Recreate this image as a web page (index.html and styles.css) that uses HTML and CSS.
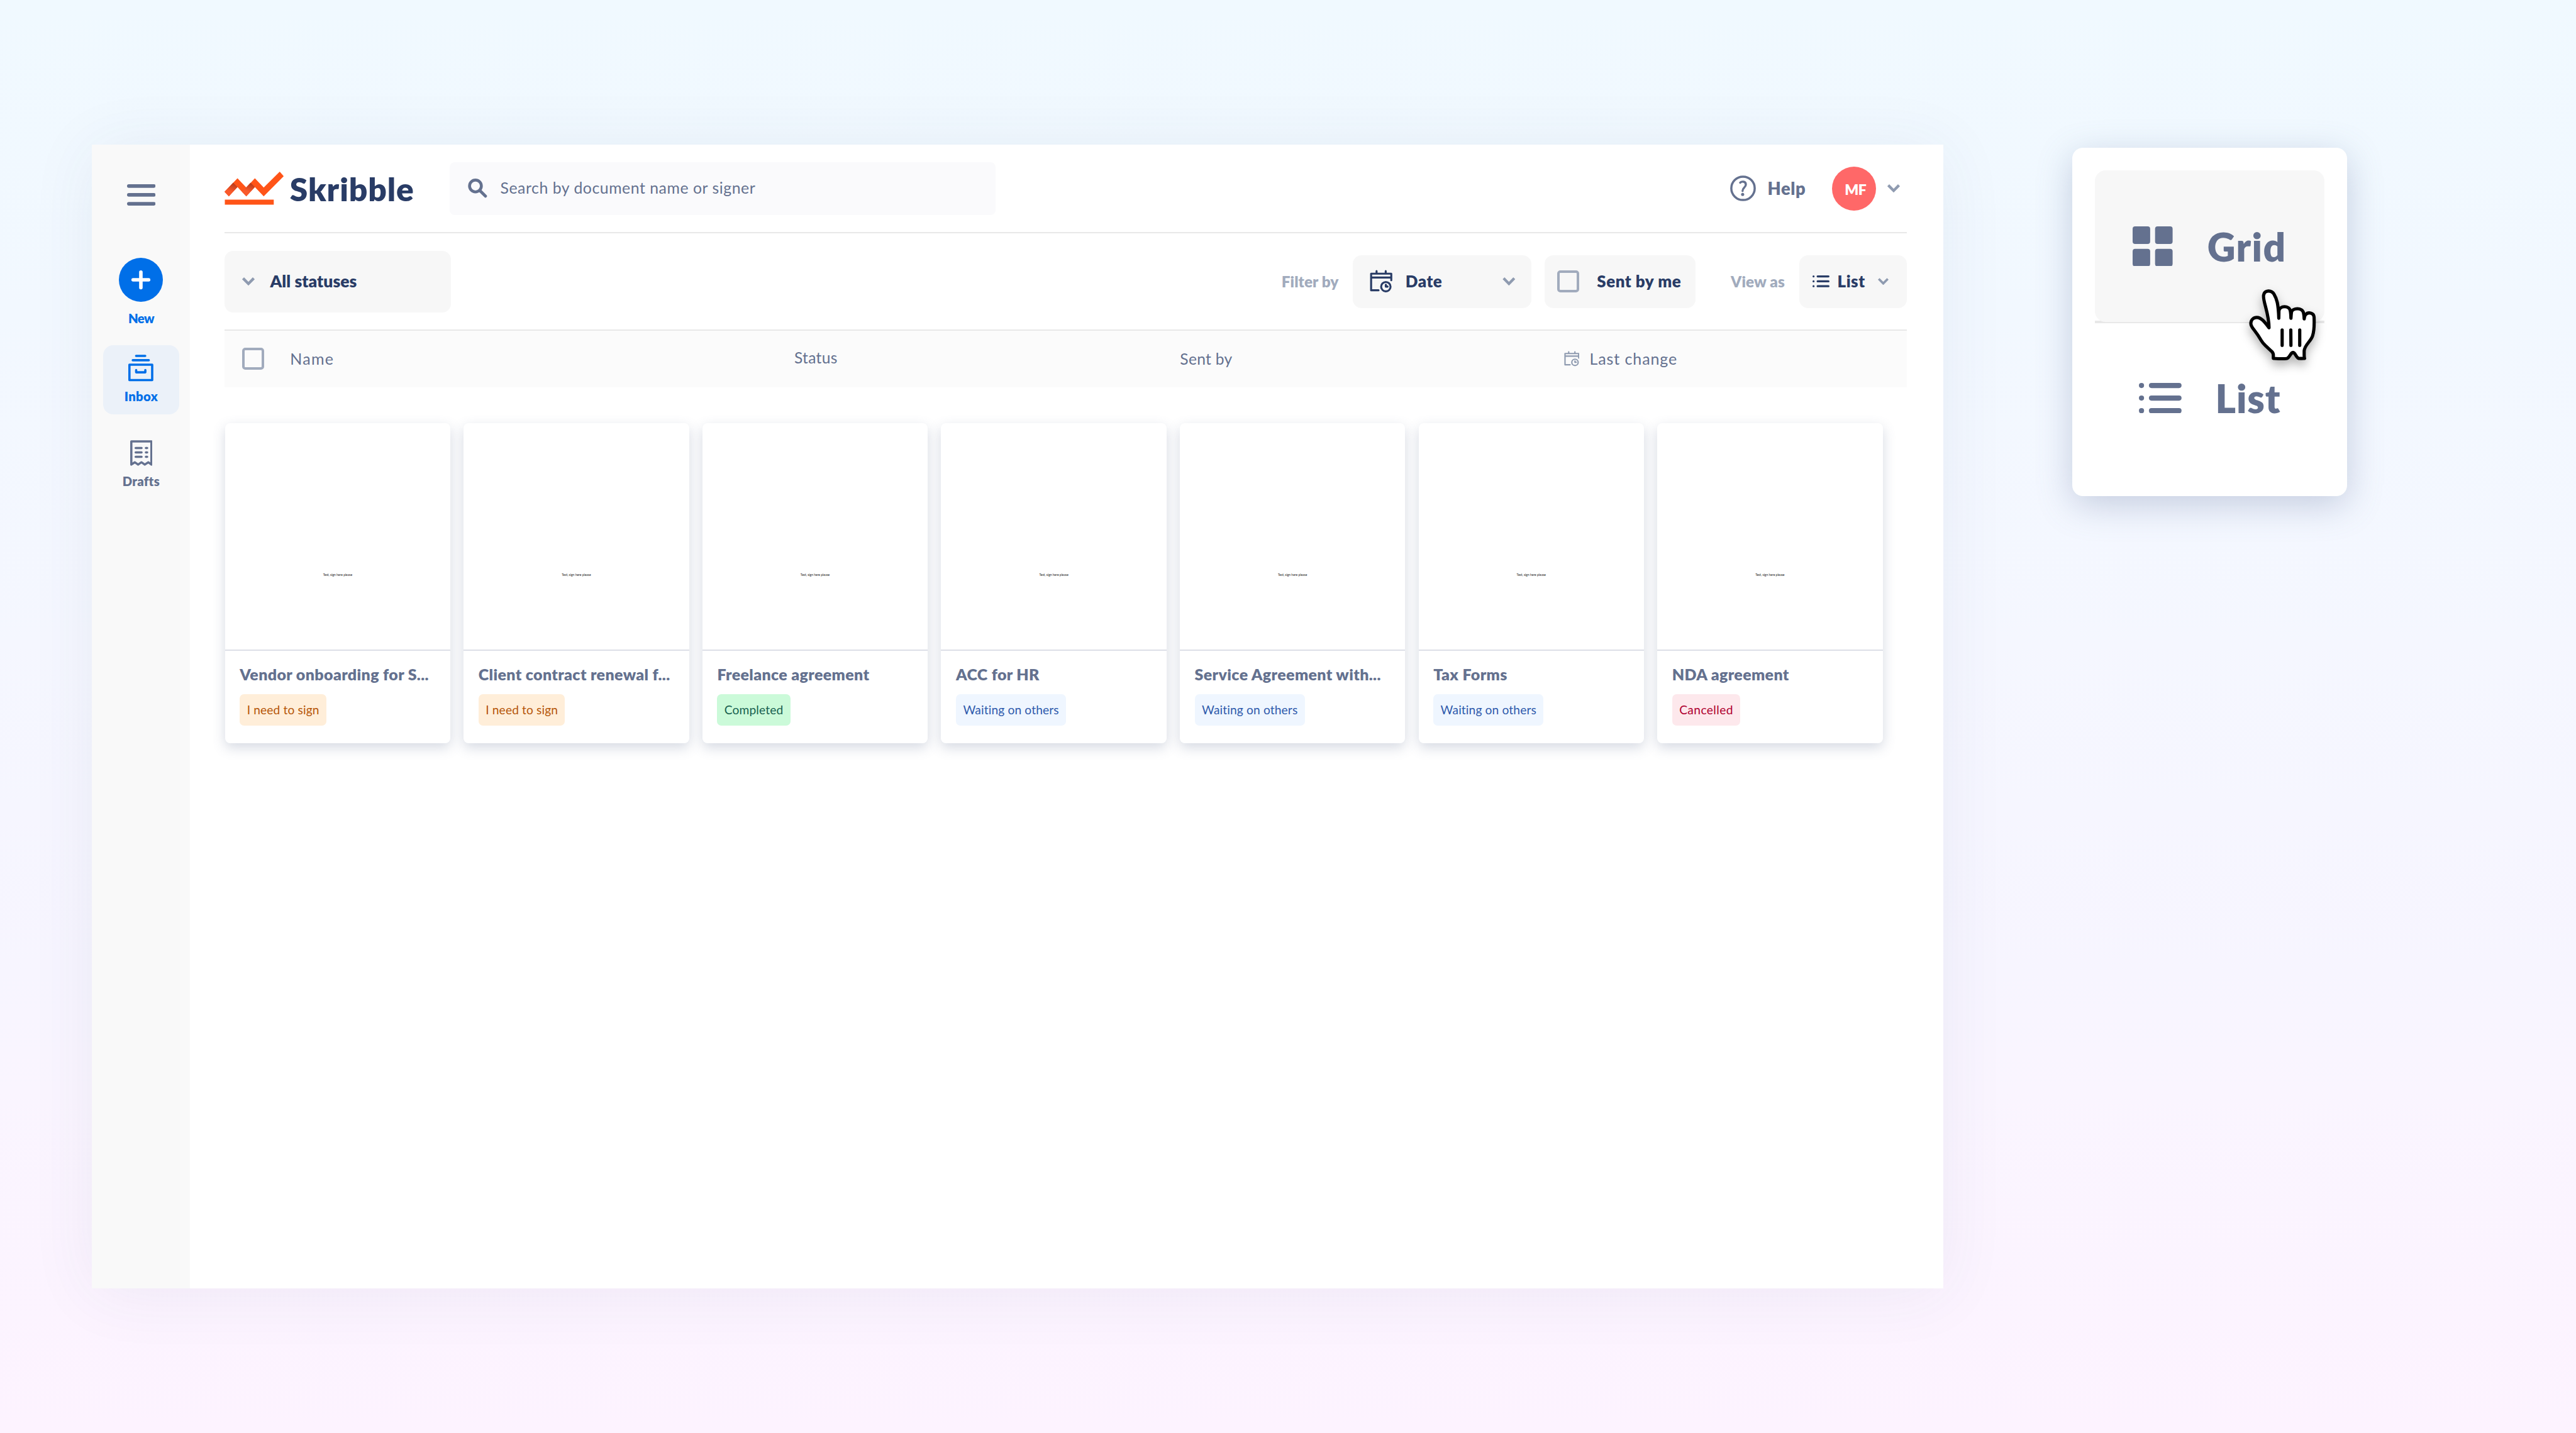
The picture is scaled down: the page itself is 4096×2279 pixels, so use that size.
FILE: index.html
```html
<!DOCTYPE html>
<html lang="en">
<head>
  <meta charset="UTF-8" />
  <meta name="viewport" content="width=device-width, initial-scale=1.0"/>
  <title>Skribble</title>
  <link rel="stylesheet" href="styles.css">
</head>
<body>

  <!-- Shared icons -->
  <svg class="sprite" width="0" height="0">
    <symbol id="chevron" viewBox="0 0 20 13.4">
      <path d="M1.5 1.6 10 10.2l8.5-8.6" fill="none" stroke="currentColor" stroke-width="4.3"/>
    </symbol>
    <symbol id="calendar" viewBox="56 81 186 186">
      <g fill="none" stroke="currentColor" stroke-width="16" stroke-linecap="round" stroke-linejoin="round">
        <path d="M127 247H67V113h163v53M67 144h163M111 92v21M185 92v21"/>
        <circle cx="186" cy="218" r="38"/>
        <path d="M186 203v14h14" stroke-width="17"/>
      </g>
    </symbol>
  </svg>

  <!-- App window -->
  <div class="app">
    <nav class="sidebar">
      <svg class="burger" width="45.4" height="34" viewBox="0 0 45.4 34">
        <g fill="#64718f">
          <rect width="45.4" height="5.7" rx="2.8"/>
          <rect y="14.1" width="45.4" height="5.7" rx="2.8"/>
          <rect y="28.2" width="45.4" height="5.7" rx="2.8"/>
        </g>
      </svg>
      <a class="nav-item new">
        <svg width="70" height="70" viewBox="0 0 70 70">
          <circle cx="35" cy="35" r="35" fill="#006fe8"/>
          <path d="M35 22.7v24.8M22.7 35h24.6" stroke="#fff" stroke-width="5.6" stroke-linecap="round"/>
        </svg>
        <span>New</span>
      </a>
      <a class="nav-item inbox">
        <svg width="39.8" height="42.3" viewBox="0 0 39.8 42.3">
          <g fill="none" stroke="currentColor" stroke-width="3.6" stroke-linecap="round" stroke-linejoin="round">
            <path d="M12.4 2h14.5M7.1 8.9h25.5M1.8 16h36.2v24.5H1.8zM12.5 24.6v3.5h14.6v-3.5"/>
          </g>
        </svg>
        <span>Inbox</span>
      </a>
      <a class="nav-item drafts">
        <svg width="35.6" height="40.7" viewBox="0 0 35.6 40.7">
          <g fill="none" stroke="currentColor" stroke-width="3.5" stroke-linecap="round" stroke-linejoin="round">
            <path d="M1.8 38.9V2h32v36.9l-5-3.7-5.6 3.7-5.3-3.7-5.3 3.7-5.3-3.7z"/>
            <path d="M8.7 12.6h9.4M8.7 19.5h9.4M8.7 26.6h9.4M25 12.6h2M25 19.5h2M25 26.6h2"/>
          </g>
        </svg>
        <span>Drafts</span>
      </a>
    </nav>

    <main class="content">
      <header>
        <div class="logo">
          <svg width="95" height="53" viewBox="0 0 95 53">
            <defs>
              <linearGradient id="fold1" x1="17" y1="19" x2="10" y2="38" gradientUnits="userSpaceOnUse">
                <stop offset="0" stop-color="#b5391a"/>
                <stop offset="0.7" stop-color="#f9592b"/>
              </linearGradient>
              <linearGradient id="fold2" x1="44" y1="19" x2="38" y2="38" gradientUnits="userSpaceOnUse">
                <stop offset="0" stop-color="#b5391a"/>
                <stop offset="0.7" stop-color="#f9592b"/>
              </linearGradient>
            </defs>
            <path fill="#ff5418" d="M0 32.1 20.6 10.4l14 14.8 13.7-14.8 14 14.8L87.8 0l6.3 7.3-31.8 31.9-14-14.8-13.7 14.8-14-14.8L6.9 39.2z"/>
            <path fill="url(#fold1)" d="M0 32.1 13.7 17.5l6.9 6.9L6.9 39.2z"/>
            <path fill="url(#fold2)" d="m27.7 32.1 13.7-14.6 6.9 6.9-13.7 14.8z"/>
            <path fill="#ff5418" d="M.5 44.4h77.8v8H.5z"/>
          </svg>
          <span>Skribble</span>
        </div>
        <div class="search">
          <svg width="31" height="31" viewBox="0 0 31 31">
            <g fill="none" stroke="#64718f" stroke-linecap="round">
              <circle cx="12" cy="11.8" r="9.4" stroke-width="4.6"/>
              <path d="m19.2 19.2 8.7 8.7" stroke-width="4.8"/>
            </g>
          </svg>
          <span>Search by document name or signer</span>
        </div>
        <div class="account">
          <svg width="41" height="41" viewBox="0 0 41 41">
            <g fill="none" stroke="#64718f" stroke-linecap="round">
              <circle cx="20.5" cy="20.5" r="18.6" stroke-width="3.5"/>
              <path d="M16 11.5c2.6-2.7 9-2.2 9 2.9 0 4.6-5.2 4.9-5.2 10.3" stroke-width="3.4"/>
            </g>
            <circle cx="19.9" cy="30.2" r="2.5" fill="#64718f"/>
          </svg>
          <span class="help">Help</span>
          <div class="avatar">MF</div>
          <svg class="chev" width="20" height="13.4"><use href="#chevron"/></svg>
        </div>
      </header>

      <div class="toolbar">
        <div class="box statuses">
          <svg class="chev" width="20" height="13.4"><use href="#chevron"/></svg>
          <span>All statuses</span>
        </div>
        <span class="hint filter-hint">Filter by</span>
        <div class="box date">
          <svg width="36.6" height="36.6"><use href="#calendar"/></svg>
          <span>Date</span>
          <svg class="chev" width="20.6" height="13.4"><use href="#chevron"/></svg>
        </div>
        <div class="box sent">
          <i class="checkbox"></i>
          <span>Sent by me</span>
        </div>
        <span class="hint view-hint">View as</span>
        <div class="box view">
          <svg width="27" height="18.8" viewBox="0 0 27 18.8">
            <g stroke="currentColor" stroke-width="3.2" stroke-linecap="round">
              <path d="M1.6 1.6h.1M1.6 9.4h.1M1.6 17.2h.1M8.1 1.6h17.3M8.1 9.4h17.3M8.1 17.2h17.3"/>
            </g>
          </svg>
          <span>List</span>
          <svg class="chev" width="17" height="11.6"><use href="#chevron"/></svg>
        </div>
      </div>

      <div class="table-head">
        <div class="col-name"><i class="checkbox"></i><span>Name</span></div>
        <div class="col-status">Status</div>
        <div class="col-sent">Sent by</div>
        <div class="col-change">
          <svg width="24.8" height="24.8"><use href="#calendar"/></svg>
          <span>Last change</span>
        </div>
      </div>

      <div class="cards">
        <div class="card">
          <div class="preview">Test, sign here please</div>
          <div class="info">
            <h3>Vendor onboarding for S...</h3>
            <span class="badge need">I need to sign</span>
          </div>
        </div>
        <div class="card">
          <div class="preview">Test, sign here please</div>
          <div class="info">
            <h3>Client contract renewal f...</h3>
            <span class="badge need">I need to sign</span>
          </div>
        </div>
        <div class="card">
          <div class="preview">Test, sign here please</div>
          <div class="info">
            <h3>Freelance agreement</h3>
            <span class="badge done">Completed</span>
          </div>
        </div>
        <div class="card">
          <div class="preview">Test, sign here please</div>
          <div class="info">
            <h3>ACC for HR</h3>
            <span class="badge waiting">Waiting on others</span>
          </div>
        </div>
        <div class="card">
          <div class="preview">Test, sign here please</div>
          <div class="info">
            <h3>Service Agreement with...</h3>
            <span class="badge waiting">Waiting on others</span>
          </div>
        </div>
        <div class="card">
          <div class="preview">Test, sign here please</div>
          <div class="info">
            <h3>Tax Forms</h3>
            <span class="badge waiting">Waiting on others</span>
          </div>
        </div>
        <div class="card">
          <div class="preview">Test, sign here please</div>
          <div class="info">
            <h3>NDA agreement</h3>
            <span class="badge cancelled">Cancelled</span>
          </div>
        </div>
      </div>
    </main>
  </div>

  <!-- View switcher -->
  <div class="menu">
    <div class="menu-top">
      <div class="menu-item active">
        <svg width="63.8" height="63.8" viewBox="0 0 63.8 63.8">
          <g fill="#64718f">
            <rect width="27.9" height="27.9" rx="4"/>
            <rect x="35.7" width="27.9" height="27.9" rx="4"/>
            <rect y="35.7" width="27.9" height="27.9" rx="4"/>
            <rect x="35.7" y="35.7" width="27.9" height="27.9" rx="4"/>
          </g>
        </svg>
        <span>Grid</span>
      </div>
    </div>
    <div class="menu-item list">
      <svg width="67.8" height="48.3" viewBox="0 0 67.8 48.3">
        <g fill="#64718f">
          <circle cx="4.1" cy="4.1" r="4.1"/>
          <circle cx="4.1" cy="24.1" r="4.1"/>
          <circle cx="4.1" cy="44.2" r="4.1"/>
          <rect x="15.9" width="51.9" height="8.2" rx="4.1"/>
          <rect x="15.9" y="20" width="51.9" height="8.2" rx="4.1"/>
          <rect x="15.9" y="40.1" width="51.9" height="8.2" rx="4.1"/>
        </g>
      </svg>
      <span>List</span>
    </div>
    <svg class="cursor" width="106.3" height="113.2" viewBox="80 58 540 575">
      <g stroke="#000" stroke-width="26" stroke-linecap="round" stroke-linejoin="round">
        <path fill="#fff" d="M277 617v-25q0-20-14-32L213 513Q193 495 180 473 155 430 118 382C100 360 95 350 95 332 97 303 118 286 143 286c38 0 65 38 99 83 0-50-12-110-28-170-14-50-20-80-15-96 8-38 63-42 84-4 22 36 34 76 38 194l1-60c5-44 84-46 92 0q4 20 5 60 2-30 4-48c8-38 88-42 98 6q4 20 5 47 2-24 12-36c20-22 66-16 68 22 2 50 2 108-12 150-14 46-64 72-68 122v36q1 20 3 25-30 1-48 0c-22-10-27-48-45-48-20 0-24 37-46 47-12 4-80 3-113 1z"/>
        <path fill="none" d="M348 387v124M418 387l1 124M490 387v124"/>
      </g>
    </svg>
  </div>

</body>
</html>
```
FILE: styles.css
```css
* {
  box-sizing: border-box;
}
body {
  margin: 0;
  height: 2279px;
  display: flex;
  align-items: flex-start;
  overflow: hidden;
  font-family: Lato, 'Open Sans', sans-serif;
  line-height: 1;
  color: #64718f;
  background: linear-gradient(180deg, #f0f9ff 0%, #f2f8ff 22%, #f5f7ff 45%, #f7f5ff 68%, #faf5ff 76%, #fdf3ff 100%);
}
svg {
  display: block;
  flex: none;
}
span { white-space: nowrap; }
.sprite { position: absolute; }

/* === App window === */
.app {
  display: flex;
  width: 2943.3px;
  height: 1818.7px;
  margin: 230.3px 0 0 146.4px;
  background: #fff;
  box-shadow: 0 6px 100px rgba(60, 65, 115, 0.07);
}

/* === Sidebar === */
.sidebar {
  width: 156px;
  padding-top: 62.6px;
  background: #f9f9f9;
  display: flex;
  flex-direction: column;
  align-items: center;
}
.nav-item {
  display: flex;
  flex-direction: column;
  align-items: center;
  font-size: 20.3px;
  line-height: 24px;
  font-weight: 800;
  letter-spacing: 0.3px;
}
.new {
  margin-top: 83.6px;
  gap: 13.5px;
  color: #006fe8;
}
.new span { letter-spacing: -0.6px; }
.inbox {
  width: 120.8px;
  height: 110.6px;
  margin-top: 30.7px;
  padding-top: 15.7px;
  gap: 11.4px;
  border-radius: 16px;
  background: #ebf1f9;
  color: #006fe8;
}
.drafts {
  margin-top: 40.7px;
  gap: 12.7px;
}

/* === Header === */
.content {
  flex: 1;
  padding: 0 57.8px 0 54.4px;
}
header {
  height: 141.2px;
  display: flex;
  align-items: center;
  border-bottom: 2px solid #e8e8e8;
}
.logo {
  width: 358.7px;
  display: flex;
  align-items: center;
  gap: 9px;
  font-size: 51.5px;
  font-weight: 800;
  letter-spacing: 0.9px;
  color: #293c66;
}
.logo span { padding-top: 2px; }
.search {
  width: 867.5px;
  height: 84.5px;
  padding-left: 28.1px;
  display: flex;
  align-items: center;
  gap: 21px;
  border-radius: 8px;
  background: #fafafc;
  font-size: 24.8px;
  letter-spacing: 0.54px;
}
.account {
  margin-left: auto;
  padding-right: 11px;
  display: flex;
  align-items: center;
}
.help {
  width: 102.6px;
  margin-left: 18.5px;
  font-size: 27.3px;
  font-weight: 800;
  letter-spacing: 0.6px;
}
.avatar {
  width: 70.3px;
  height: 70.3px;
  margin-right: 17.5px;
  padding: 3px 0 0 4px;
  display: flex;
  align-items: center;
  justify-content: center;
  border-radius: 50%;
  background: #ff6868;
  color: #fff;
  font-size: 23px;
  font-weight: 800;
  letter-spacing: -0.6px;
}
.chev { color: #8f9bb0; }

/* === Toolbar === */
.toolbar {
  height: 152.4px;
  display: flex;
  align-items: center;
}
.box {
  height: 84.3px;
  display: flex;
  align-items: center;
  border-radius: 14px;
  background: #f7f7f7;
  color: #293c66;
  font-size: 25.9px;
  font-weight: 800;
  letter-spacing: 0.55px;
}
.statuses {
  width: 360.6px;
  height: 98.2px;
  padding-left: 28.7px;
  gap: 24px;
  margin-right: auto;
  font-size: 26.5px;
  letter-spacing: 0.05px;
}
.hint {
  color: #a1abbd;
  font-size: 24.3px;
  font-weight: 800;
  letter-spacing: 0.1px;
}
.filter-hint { width: 112.8px; }
.view-hint {
  width: 108.4px;
  margin-left: 56.5px;
}
.date {
  width: 284px;
  padding: 0 24.5px 0 27.7px;
  gap: 20px;
}
.date .chev { margin-left: auto; }
.sent {
  width: 240px;
  margin-left: 21.1px;
  padding-left: 20.7px;
  gap: 28px;
}
.checkbox {
  width: 35px;
  height: 35px;
  border: 4.4px solid #a1abbd;
  border-radius: 5px;
}
.view {
  width: 171.4px;
  padding: 0 28.7px 0 21px;
  gap: 13px;
}
.view .chev { margin-left: auto; }

/* === Table head === */
.table-head {
  height: 92px;
  display: grid;
  grid-template-columns: 906.2px 613.4px 610.2px 1fr;
  align-items: center;
  border-top: 2px solid #e8e8e8;
  background: #fbfbfb;
  font-size: 24.6px;
  letter-spacing: 0.3px;
}
.col-name {
  display: flex;
  align-items: center;
  gap: 41.5px;
  padding-left: 27.9px;
}
.col-name span {
  font-size: 25px;
  letter-spacing: 1.3px;
}
.col-status { padding-bottom: 2.6px; }
.col-change {
  display: flex;
  align-items: center;
  gap: 16.2px;
  font-size: 25px;
  letter-spacing: 0.9px;
}
.col-change svg { color: #8f9bb0; }

/* === Cards === */
.cards {
  display: flex;
  gap: 21.2px;
  padding: 57.6px 0 0 0.9px;
}
.card {
  flex: none;
  width: 358.4px;
  height: 508.7px;
  border-radius: 8px;
  background: #fff;
  box-shadow: 0 7px 20px rgba(80, 95, 135, 0.24);
}
.preview {
  height: 362px;
  padding-top: 123px;
  display: flex;
  align-items: center;
  justify-content: center;
  border-bottom: 2px solid #dcdfe7;
  color: #222;
  font-size: 5px;
}
.info {
  padding: 22.5px 23.6px 0;
}
.card h3 {
  margin: 0 0 18px;
  font-size: 25px;
  line-height: 28px;
  font-weight: 800;
  letter-spacing: 0.35px;
  white-space: nowrap;
}
.badge {
  display: inline-flex;
  align-items: center;
  height: 50px;
  padding: 0 11.2px 0 11.4px;
  border-radius: 7px;
  font-size: 19.2px;
  letter-spacing: 0.13px;
}
.need { background: #ffeed9; color: #b65608; }
.done { background: #cbfad9; color: #17604f; }
.waiting { background: #eff6ff; color: #2e5aac; }
.cancelled {
  background: #fde8ec;
  color: #b00030;
  letter-spacing: 0.4px;
}

/* === View switcher === */
.menu {
  position: relative;
  width: 437.3px;
  height: 553.7px;
  margin: 235.1px 0 0 205.2px;
  padding: 35.9px 36.3px;
  border-radius: 17px;
  background: #fff;
  box-shadow: 0 14px 56px rgba(85, 105, 150, 0.3);
}
.menu-top {
  height: 243.1px;
  background: linear-gradient(#e8e8e8, #e8e8e8) bottom / 100% 4px no-repeat;
}
.menu-item {
  display: flex;
  align-items: center;
  font-size: 62px;
  font-weight: 800;
  letter-spacing: 1.4px;
}
.active {
  height: 241.2px;
  padding-left: 60.3px;
  gap: 54.5px;
  border-radius: 17px;
  background: #f7f7f7;
}
.list {
  height: 237.4px;
  padding-left: 69.6px;
  gap: 54px;
  letter-spacing: 0.8px;
}
.cursor {
  position: absolute;
  left: 281.4px;
  top: 225px;
  overflow: visible;
  filter: drop-shadow(0 8px 8px rgba(0, 0, 0, 0.3));
}
```
